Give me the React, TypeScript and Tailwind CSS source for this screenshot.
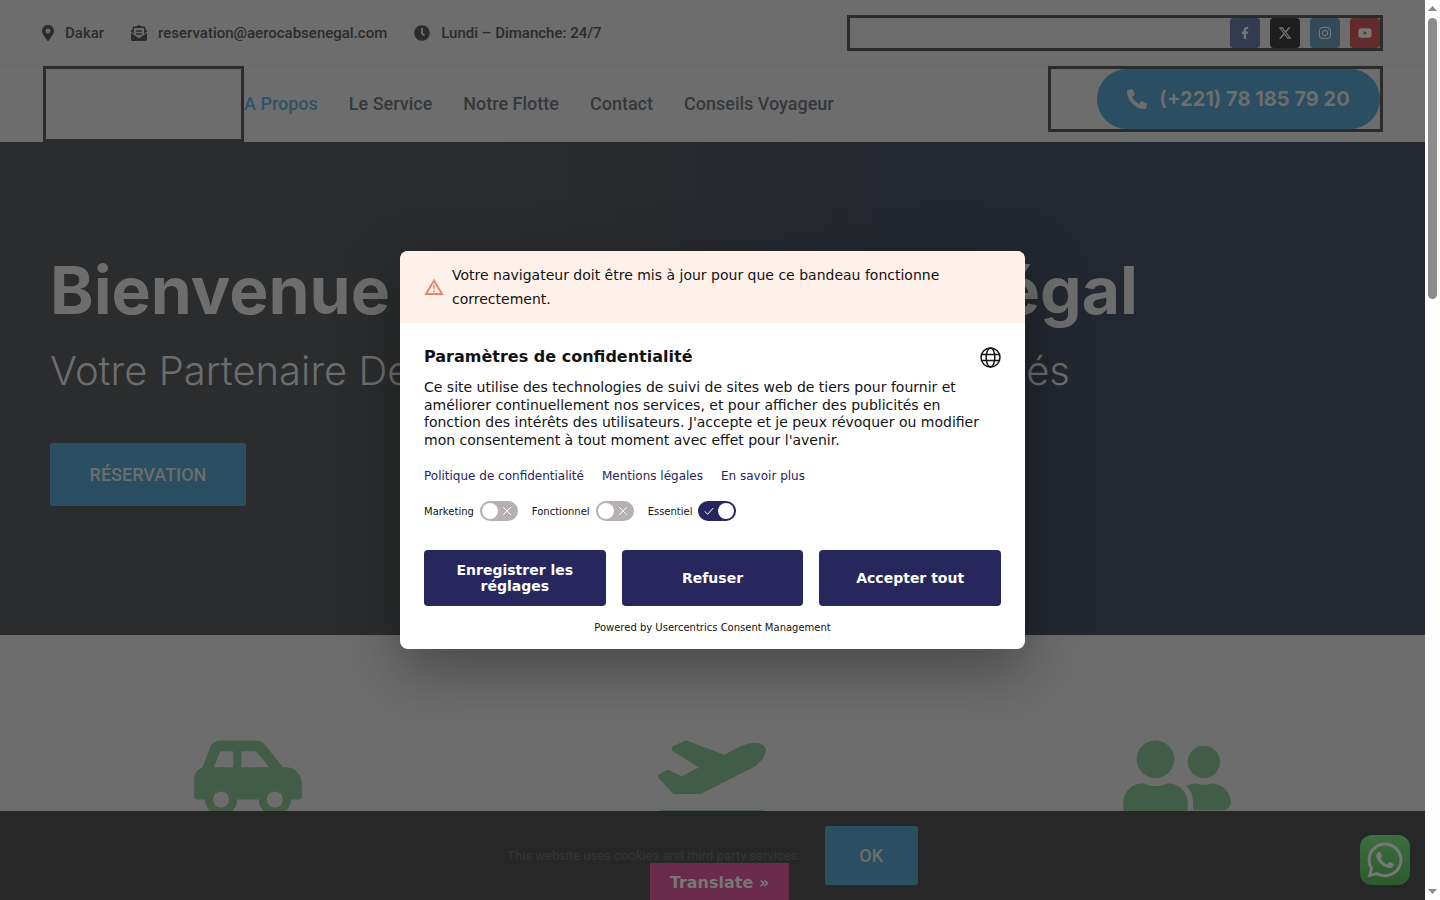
import type { ReactNode } from "react";
import {
  FaCarSide,
  FaClock,
  FaEnvelopeOpenText,
  FaFacebookF,
  FaInstagram,
  FaMapMarkerAlt,
  FaPhoneAlt,
  FaPlaneDeparture,
  FaUserFriends,
  FaWhatsapp,
  FaYoutube,
} from "react-icons/fa";
import { FaXTwitter } from "react-icons/fa6";

const contacts = [
  { icon: <FaMapMarkerAlt className="h-4 w-3" />, text: "Dakar" },
  { icon: <FaEnvelopeOpenText className="size-4" />, text: "reservation@aerocabsenegal.com" },
  { icon: <FaClock className="size-4" />, text: "Lundi – Dimanche: 24/7" },
];

const navItems = ["A Propos", "Le Service", "Notre Flotte", "Contact", "Conseils Voyageur"];

const socials = [
  { name: "Facebook", icon: <FaFacebookF />, bg: "bg-[#343b50]" },
  { name: "X", icon: <FaXTwitter className="size-3.5" />, bg: "bg-[#1e1e1e]" },
  { name: "Instagram", icon: <FaInstagram className="size-3.5" />, bg: "bg-[#354a59]" },
  { name: "YouTube", icon: <FaYoutube className="size-3.5" />, bg: "bg-[#632a2b]" },
];

function Header() {
  return (
    <header className="bg-[#6d6d6d] font-['Roboto',sans-serif] font-medium">
      <div className="flex h-[66px] items-center justify-between border-b border-[#696969] pr-[42px] pl-[42px]">
        <ul className="flex items-center gap-[27px] text-[15px] leading-6 text-[#2b2b2b]">
          {contacts.map((c) => (
            <li key={c.text} className="flex items-center gap-[11px]">
              {c.icon}
              {c.text}
            </li>
          ))}
        </ul>
        <div className="flex w-[536px] justify-end gap-2.5 border-3 border-[#2b2b2b]">
          {socials.map((s) => (
            <a
              key={s.name}
              href="#"
              aria-label={s.name}
              className={"flex size-[30px] items-center justify-center rounded text-xs text-[#777] " + s.bg}
            >
              {s.icon}
            </a>
          ))}
        </div>
      </div>
      <div className="flex h-[76px] items-start justify-between pr-[42px] pl-[43px]">
        <div className="flex h-full items-center">
          <div className="h-full w-[201px] border-3 border-[#2b2b2b]" />
          <nav className="flex gap-[31px] text-lg text-[#35383b]">
            {navItems.map((item, i) => (
              <a key={item} href="#" className={i === 0 ? "text-[#2b546b]" : ""}>
                {item}
              </a>
            ))}
          </nav>
        </div>
        <div className="flex w-[335px] justify-end border-3 border-[#2b2b2b]">
          <a
            href="#"
            className="flex h-[60px] w-[283px] items-center justify-center gap-3 rounded-full bg-[#2a4e62] font-['Inter',sans-serif] text-xl font-bold text-[#6d6d6d]"
          >
            <FaPhoneAlt className="size-5" />
            (+221) 78 185 79 20
          </a>
        </div>
      </div>
    </header>
  );
}

function Hero() {
  return (
    <section className="bg-linear-to-r from-[#2b2c2d] from-35% to-[#23272f] to-65% px-[50px] pt-[108px] pb-[129px] text-[#6d6d6d]">
      <h1 className="flex max-w-[1088px] justify-between font-['Inter',sans-serif] text-[66px] leading-[80px] font-bold whitespace-nowrap">
        <span>Bienvenue Chez AeroCab</span> <span>Sénégal</span>
      </h1>
      <p className="mt-4 flex max-w-[1020px] justify-between font-['Inter',sans-serif] text-[40px] leading-[50px] font-light whitespace-nowrap">
        <span>Votre Partenaire De Confiance</span> <span>Trajets Privés</span>
      </p>
      <a
        href="#"
        className="mt-[47px] flex h-[63px] w-[196px] items-center justify-center rounded-xs bg-[#2a4e62] font-['Roboto',sans-serif] text-lg font-medium"
      >
        RÉSERVATION
      </a>
    </section>
  );
}

function Services() {
  return (
    <section className="grid grid-cols-3 px-4 pt-[100px] text-[#415c47]">
      <FaCarSide className="h-[86px] w-[108px] justify-self-center" />
      <FaPlaneDeparture className="h-[86px] w-[108px] justify-self-center" />
      <FaUserFriends className="h-[86px] w-[108px] justify-self-center" />
    </section>
  );
}

function CookieBar() {
  return (
    <div className="absolute inset-x-0 bottom-0 flex h-[89px] items-center justify-center gap-6 bg-[#272727] font-['Roboto',sans-serif]">
      <p className="text-[13px] text-[#363636]">This website uses cookies and third party services.</p>
      <button className="h-[59px] w-[93px] rounded-xs bg-[#2a4e62] text-lg font-medium text-[#6d6d6d]">OK</button>
      <button className="absolute bottom-0 left-[650px] h-[37px] w-[139px] bg-[#692b49] pt-0.5 font-['DejaVu_Sans',sans-serif] text-base font-bold text-[#777]">
        Translate »
      </button>
      <a
        href="#"
        aria-label="WhatsApp"
        className="absolute right-[15px] bottom-[15px] flex size-[50px] items-center justify-center rounded-xl bg-linear-to-b from-[#3c6e42] to-[#2b5b2d] text-[#777]"
      >
        <FaWhatsapp className="size-10" />
      </a>
    </div>
  );
}

function Toggle({ id, label, on }: { id: string; label: string; on?: boolean }) {
  return (
    <div className="flex items-center gap-1.5">
      <label htmlFor={id}>{label}</label>
      <span className="relative flex">
        <input
          id={id}
          type="checkbox"
          defaultChecked={on}
          disabled={on}
          className="peer h-5 w-[38px] appearance-none rounded-full bg-[#b7b0b0] checked:bg-[#27265d]"
        />
        <span className="pointer-events-none absolute top-0.5 left-0.5 size-4 rounded-full bg-white peer-checked:left-5" />
        <svg
          viewBox="0 0 10 10"
          fill="none"
          stroke="white"
          className={
            on
              ? "pointer-events-none absolute top-[5px] left-1.5 size-2.5"
              : "pointer-events-none absolute top-[5px] right-1.5 size-2.5"
          }
        >
          <path d={on ? "M0.8 5.3 3.6 8.3 9.2 2" : "M1.2 1.2 8.8 8.8 M8.8 1.2 1.2 8.8"} />
        </svg>
      </span>
    </div>
  );
}

function ModalButton({ children }: { children: ReactNode }) {
  return (
    <button className="h-14 flex-1 rounded bg-[#27265d] px-4 text-sm leading-4 font-bold text-white">
      {children}
    </button>
  );
}

function ConsentDialog() {
  return (
    <div className="absolute inset-0 flex items-center justify-center">
      <div
        role="dialog"
        aria-labelledby="consent-title"
        className="w-full max-w-[625px] overflow-hidden rounded-lg bg-white font-['DejaVu_Sans',sans-serif] text-[#131313] shadow-[0_20px_60px_rgba(0,0,0,0.35)]"
      >
        <div className="flex items-center gap-2 bg-[#fef1ea] px-6 py-3 text-sm leading-6">
          <svg viewBox="0 0 20 20" fill="none" stroke="#e8866a" strokeWidth="2" className="size-5 shrink-0">
            <path d="M10 3.6 18 17H2Z" />
            <path d="M10 7.8v4.4M10 13.2v2" strokeWidth="1.5" />
          </svg>
          <p>Votre navigateur doit être mis à jour pour que ce bandeau fonctionne correctement.</p>
        </div>
        <div className="px-6 pt-6 pb-3.5">
          <div className="flex h-5 items-center justify-between">
            <h2 id="consent-title" className="text-base font-bold">
              Paramètres de confidentialité
            </h2>
            <button aria-label="Langue">
              <svg viewBox="0 0 21 21" fill="none" stroke="#131313" strokeWidth="1.5" className="size-[21px]">
                <circle cx="10.5" cy="10.5" r="9.5" />
                <ellipse cx="10.5" cy="10.5" rx="4.3" ry="9.5" />
                <path d="M1.8 7.5h17.4M1.8 13.5h17.4" />
              </svg>
            </button>
          </div>
          <p className="mt-3 text-sm leading-tight">
            Ce site utilise des technologies de suivi de sites web de tiers pour fournir et améliorer continuellement
            nos services, et pour afficher des publicités en fonction des intérêts des utilisateurs. J'accepte et je
            peux révoquer ou modifier mon consentement à tout moment avec effet pour l'avenir.
          </p>
          <div className="mt-[19px] flex gap-[18px] text-xs text-[#27265d]">
            <a href="#">Politique de confidentialité</a>
            <a href="#">Mentions légales</a>
            <a href="#">En savoir plus</a>
          </div>
          <div className="mt-[17px] flex gap-3.5 text-[10px]">
            <Toggle id="marketing" label="Marketing" />
            <Toggle id="fonctionnel" label="Fonctionnel" />
            <Toggle id="essentiel" label="Essentiel" on />
          </div>
          <div className="mt-[29px] flex gap-4">
            <ModalButton>Enregistrer les réglages</ModalButton>
            <ModalButton>Refuser</ModalButton>
            <ModalButton>Accepter tout</ModalButton>
          </div>
          <p className="mt-[15px] text-center text-[10px] leading-[14px]">Powered by Usercentrics Consent Management</p>
        </div>
      </div>
    </div>
  );
}

function Scrollbar() {
  return (
    <div aria-hidden="true" className="flex w-[15px] shrink-0 flex-col items-center justify-between bg-[#fcfcfc] py-1.5">
      <div className="flex flex-col items-center gap-[7px]">
        <svg viewBox="0 0 9 5" className="h-[5px] w-[9px]" fill="#8b8b8b">
          <path d="M0 5 4.5 0 9 5Z" />
        </svg>
        <div className="h-[281px] w-[9px] rounded-full bg-[#8b8b8b]" />
      </div>
      <svg viewBox="0 0 9 5" className="h-[5px] w-[9px]" fill="#8b8b8b">
        <path d="M0 0 4.5 5 9 0Z" />
      </svg>
    </div>
  );
}

export default function App() {
  return (
    <div className="flex h-screen">
      <main className="relative min-w-0 flex-1 overflow-hidden bg-[#6d6d6d]">
        <Header />
        <Hero />
        <Services />
        <CookieBar />
        <ConsentDialog />
      </main>
      <Scrollbar />
    </div>
  );
}
